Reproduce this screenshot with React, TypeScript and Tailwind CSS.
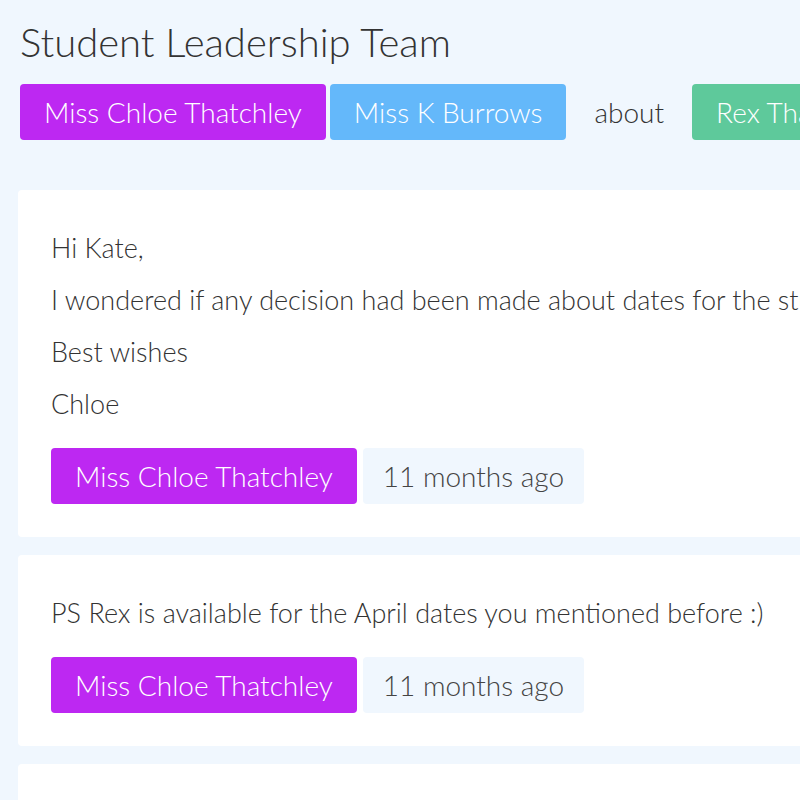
const tagBase = "h-14 flex items-center rounded whitespace-nowrap text-[28px]";

function Message({ lines }: { lines: string[] }) {
  return (
    <div className="bg-white rounded ml-[18px] w-[1100px] px-[33px] pt-8 pb-[33px]">
      {lines.map((l, i) => (
        <p key={i} className="leading-[52px] text-[27px] text-[#333] whitespace-nowrap">
          {l}
        </p>
      ))}
      <div className="flex gap-[6px] mt-[18px]">
        <span className={`${tagBase} px-6 bg-[#bd28f2] text-white`}>Miss Chloe Thatchley</span>
        <span className={`${tagBase} px-5 bg-[#f0f7fe] text-[#444]`}>11 months ago</span>
      </div>
    </div>
  );
}

export default function App() {
  return (
    <div
      className="h-screen w-[800px] overflow-hidden bg-[#f0f7fe] font-light"
      style={{ fontFamily: "Lato, 'Open Sans', sans-serif" }}
    >
      <h1 className="pl-5 pt-[18px] text-[40px] leading-[48px] text-[#333] whitespace-nowrap">
        Student Leadership Team
      </h1>
      <div className="flex gap-1 pl-5 mt-[18px] w-[1200px]">
        <span className={`${tagBase} px-6 bg-[#bd28f2] text-white`}>Miss Chloe Thatchley</span>
        <span className={`${tagBase} px-6 bg-[#64b8fa] text-white`}>Miss K Burrows</span>
        <span className={`${tagBase} px-6 text-[#333]`}>about</span>
        <span className={`${tagBase} px-6 bg-[#5ec99b] text-white`}>Rex Thatchley</span>
      </div>
      <div className="flex flex-col gap-[18px] mt-[50px]">
        <Message
          lines={[
            "Hi Kate,",
            "I wondered if any decision had been made about dates for the student leadership residential?",
            "Best wishes",
            "Chloe",
          ]}
        />
        <Message lines={["PS Rex is available for the April dates you mentioned before :)"]} />
        <Message lines={["Thanks Chloe"]} />
      </div>
    </div>
  );
}
